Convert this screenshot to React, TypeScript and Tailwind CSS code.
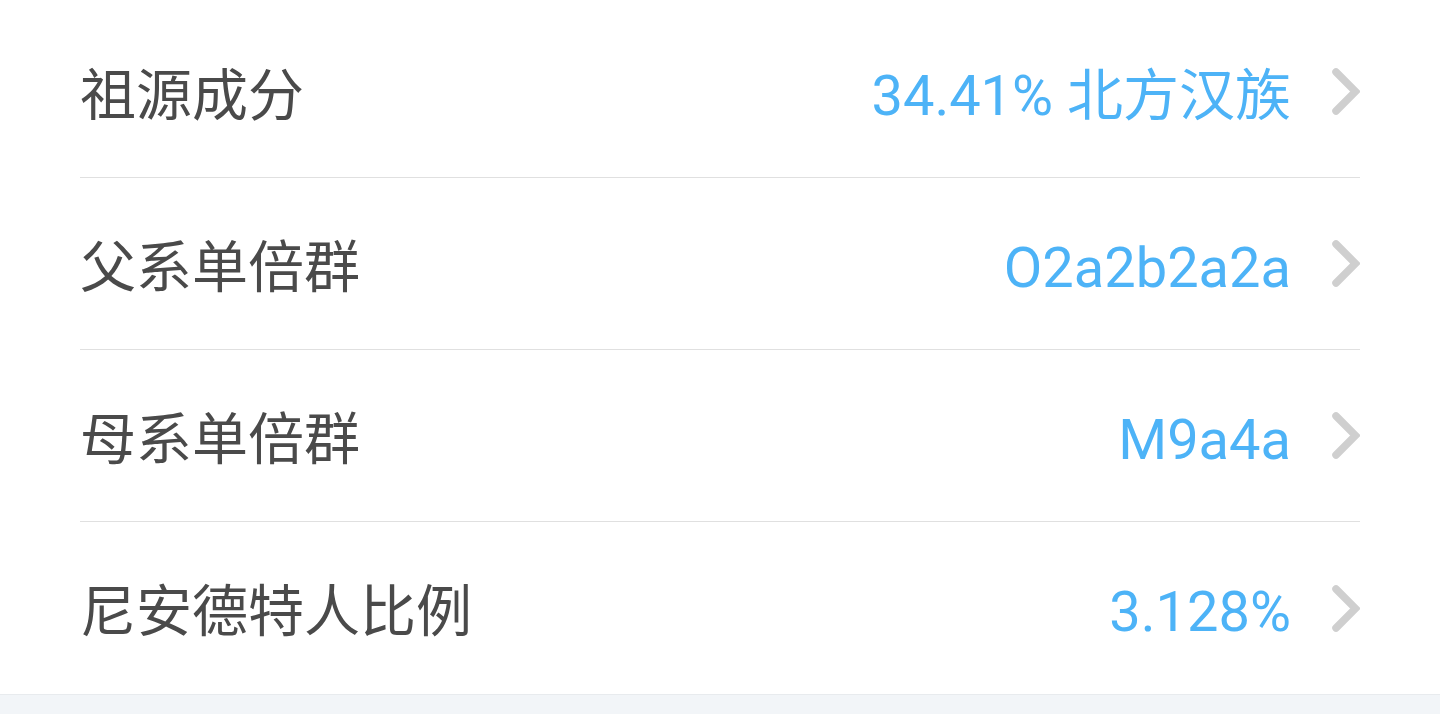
import React from "react";

const rows = [
  { label: "祖源成分", value: "34.41% 北方汉族" },
  { label: "父系单倍群", value: "O2a2b2a2a" },
  { label: "母系单倍群", value: "M9a4a" },
  { label: "尼安德特人比例", value: "3.128%" },
];

function Chevron() {
  return (
    <svg width="28" height="47" viewBox="0 0 28 47" className="shrink-0">
      <polyline
        points="4,4 23.5,23.5 4,43"
        fill="none"
        stroke="#cfcfcf"
        strokeWidth="7.5"
        strokeLinecap="round"
        strokeLinejoin="miter"
      />
    </svg>
  );
}

export default function App() {
  return (
    <div
      className="w-[1440px] h-[714px] bg-[#f2f5f8] overflow-hidden"
      style={{ fontFamily: 'Roboto, "Noto Sans CJK SC", sans-serif' }}
    >
      <div className="bg-white pt-[6px] px-[80px] border-b border-[#e8ebee]">
        {rows.map((r, i) => (
          <div
            key={r.label}
            className={`flex items-center justify-between h-[172px] ${
              i < rows.length - 1 ? "border-b border-[#e0e0e0]" : ""
            }`}
          >
            <span className="text-[56px] leading-none text-[#4a4a4a] pt-[8px]">{r.label}</span>
            <div className="flex items-center gap-[41px]">
              <span className="text-[56px] leading-none text-[#4db3f7] pt-[8px]">{r.value}</span>
              <Chevron />
            </div>
          </div>
        ))}
      </div>
    </div>
  );
}
